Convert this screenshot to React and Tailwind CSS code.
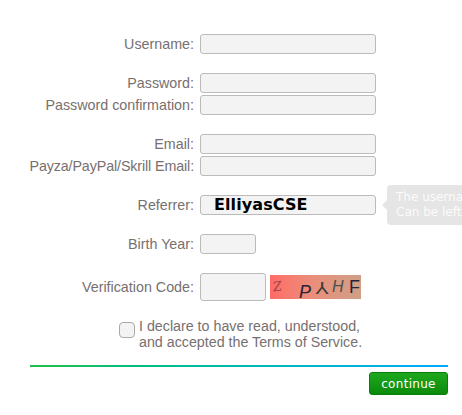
const inputCls = "block h-5 w-44 rounded-[3px] border border-[#bbbbbb] bg-[#f3f3f3]";

function Row({ label, labelClass = "", className = "", children }) {
  return (
    <div className={"flex items-center gap-[6px] " + className}>
      <div className={"flex w-[164px] justify-end whitespace-nowrap text-right text-[14.3px] leading-5 text-[#777070] " + labelClass}>{label}</div>
      {children}
    </div>
  );
}

function Captcha() {
  return (
    <div className="h-6 w-[91px] bg-gradient-to-r from-[#ff6b66] via-[#e8907c] to-[#cf9f87]">
      <svg width="91" height="24" viewBox="0 0 91 24">
        <text x="3" y="16" fontFamily="'DejaVu Serif', serif" fontStyle="italic" fontSize="13" fill="#a23f4b" transform="rotate(-8 6 12)">Z</text>
        <text x="29" y="23" fontFamily="'Liberation Sans', sans-serif" fontStyle="italic" fontSize="18" fill="#2a2238">P</text>
        <text x="0" y="0" fontFamily="'Liberation Sans', sans-serif" fontSize="16" fill="#3a3a34" transform="translate(59 7) rotate(180) scale(1.3 1)">Y</text>
        <text x="62" y="17" fontFamily="'Liberation Sans', sans-serif" fontStyle="italic" fontSize="16" fill="#485048">H</text>
        <text x="79" y="18" fontFamily="'Liberation Sans', sans-serif" fontSize="18" fill="#262238">F</text>
      </svg>
    </div>
  );
}

export default function App() {
  return (
    <div className="relative h-[415px] w-[462px] overflow-hidden bg-white pl-[30px] pt-[34px] font-['Liberation_Sans',Arial,sans-serif]">
      <div className="w-[418px]">
        <Row label="Username:"><div className={inputCls} /></Row>
        <Row label="Password:" className="mt-[19px]"><div className={inputCls} /></Row>
        <Row label="Password confirmation:" className="mt-[2px]"><div className={inputCls} /></Row>
        <Row label="Email:" className="mt-[19px]"><div className={inputCls} /></Row>
        <Row label="Payza/PayPal/Skrill Email:" labelClass="tracking-[-0.12px]" className="mt-[2px]"><div className={inputCls} /></Row>
        <Row label="Referrer:" className="mt-[19px]">
          <div className="relative">
            <div className={inputCls + " pl-[13px] font-['DejaVu_Sans',sans-serif] text-[16px] font-bold leading-[18px] tracking-[0.1px] text-black"}>ElliyasCSE</div>
            <div className="absolute left-[187px] top-[-10px] h-10 w-[120px] overflow-hidden whitespace-nowrap rounded-[4px] bg-[#e5e5e5] pl-[9px] pt-[5px] font-['DejaVu_Sans',sans-serif] text-[12px] leading-[15px] text-[#fbfbfb]">
              The username of the<br />Can be left blank
            </div>
            <div className="absolute left-[182px] top-[5px] h-0 w-0 border-y-[5px] border-r-[5px] border-y-transparent border-r-[#e5e5e5]" />
          </div>
        </Row>
        <Row label="Birth Year:" className="mt-[19px]"><div className="h-5 w-14 rounded-[3px] border border-[#bbbbbb] bg-[#f3f3f3]" /></Row>
        <Row label="Verification Code:" className="mt-[19px]">
          <div className="flex items-center gap-1">
            <div className="h-7 w-[66px] rounded-[3px] border border-[#bbbbbb] bg-[#f3f3f3]" />
            <Captcha />
          </div>
        </Row>
        <div className="ml-[89px] mt-[17px] flex items-start gap-1">
          <div className="mt-[4px] h-4 w-4 rounded-[4px] border border-[#aaaaaa] bg-[#f3f3f3]" />
          <div className="whitespace-nowrap text-[14.25px] leading-4 text-[#777070]">I declare to have read, understood,<br />and accepted the Terms of Service.</div>
        </div>
        <div className="mt-[15px] h-[2px] w-full bg-gradient-to-r from-[#22c040] to-[#00a8ff]" />
        <div className="mt-[5px] flex justify-end">
          <div className="flex h-[23px] w-[79px] items-center justify-center rounded-[3px] border border-[#0b7d0b] bg-gradient-to-b from-[#1fa81f] to-[#0a8a0a] font-['DejaVu_Sans',sans-serif] text-[12px] tracking-[0.3px] text-white">continue</div>
        </div>
      </div>
    </div>
  );
}
